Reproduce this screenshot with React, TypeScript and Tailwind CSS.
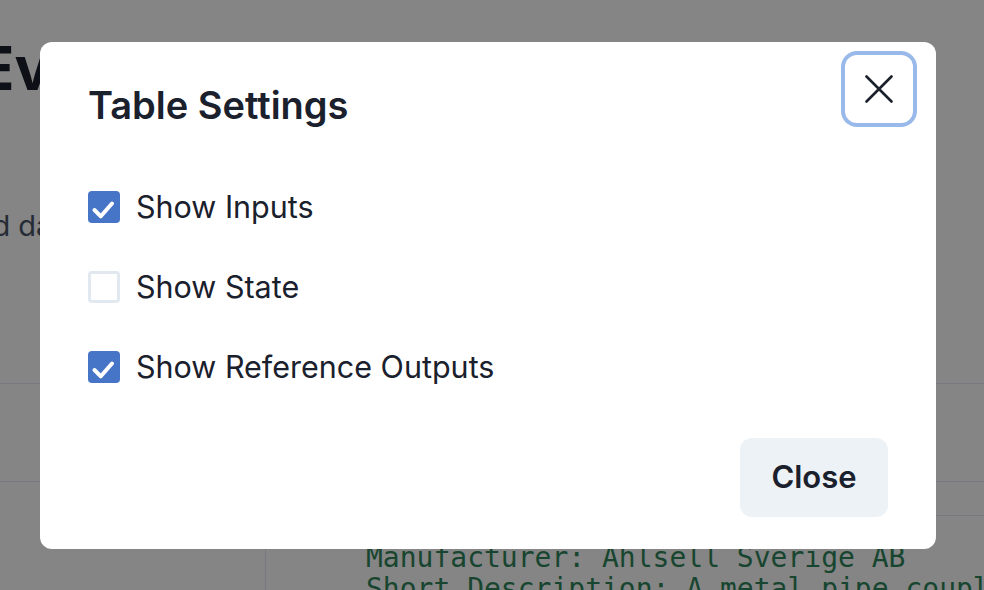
import React from "react";

const font = { fontFamily: "Inter, 'Noto Sans', sans-serif" };

function Check({ checked }: { checked: boolean }) {
  if (checked) {
    return (
      <span className="block h-[32px] w-[32px] shrink-0 rounded-[4px] bg-[#4674c6]">
        <svg width="32" height="32" viewBox="0 0 32 32" fill="none">
          <path d="M6.5 19 L12.8 25.3 L24 12.5" stroke="#fff" strokeWidth="4" strokeLinecap="round" strokeLinejoin="round" />
        </svg>
      </span>
    );
  }
  return <span className="h-[32px] w-[32px] shrink-0 rounded-[4px] border-[3px] border-[#e2e8f0] bg-white" />;
}

export default function App() {
  const rows: [string, boolean][] = [
    ["Show Inputs", true],
    ["Show State", false],
    ["Show Reference Outputs", true],
  ];
  return (
    <div className="relative h-[590px] w-[984px] overflow-hidden bg-white" style={font}>
      {/* background page */}
      <div className="flex h-full flex-col">
        <h1 className="ml-[-22px] mt-[32px] text-[60px] font-bold leading-[72px] text-[#1a202c]">Evaluation Results</h1>
        <p className="ml-[-41px] mt-[102px] text-[29px] leading-[40px] text-[#4a5568]">and data from the evaluation run</p>
        <div className="mt-[137px] flex-1 border-t border-[#e2e8f0]">
          <div className="h-[97px]" />
          <div className="h-[34px] border-t border-[#e2e8f0]" />
          <div className="flex flex-1">
            <div className="w-[266px] shrink-0 border-r border-[#e2e8f0]" />
            <div className="flex-1 border-t border-[#e2e8f0] pl-[100px] pt-[26px]">
              <pre className="text-[28px] leading-[31px] text-[#2f855a]" style={{ fontFamily: "'DejaVu Sans Mono', monospace" }}>
                {"Manufacturer: Ahlsell Sverige AB\nShort Description: A metal pipe coupling"}
              </pre>
            </div>
          </div>
        </div>
      </div>

      {/* overlay */}
      <div className="absolute inset-0 bg-black/[0.48]" />

      {/* modal */}
      <div className="absolute left-[40px] top-[42px] flex h-[507px] w-[896px] flex-col rounded-[12px] bg-white px-[48px] pb-[32px] pt-[41px] text-[#1a202c]">
        <h2 className="text-[38px] font-semibold leading-[44px]">Table Settings</h2>
        <button className="absolute right-[23px] top-[13px] flex h-[68px] w-[68px] items-center justify-center rounded-[12px] ring-4 ring-[#98b9e9]">
          <svg width="28" height="28" viewBox="0 0 28 28" fill="none">
            <path d="M1.5 1.5 L26.5 26.5 M26.5 1.5 L1.5 26.5" stroke="#1a202c" strokeWidth="2.6" strokeLinecap="round" />
          </svg>
        </button>
        <div className="mt-[57px] flex flex-col gap-[34px]">
          {rows.map(([label, checked]) => (
            <label key={label} className="flex h-[46px] items-center gap-[16px]">
              <Check checked={checked} />
              <span className="text-[30.5px] leading-[46px]">{label}</span>
            </label>
          ))}
        </div>
        <div className="mt-auto flex justify-end">
          <button className="h-[79px] w-[148px] rounded-[12px] bg-[#edf2f7] text-[31px] font-semibold text-[#1a202c]">Close</button>
        </div>
      </div>
    </div>
  );
}
